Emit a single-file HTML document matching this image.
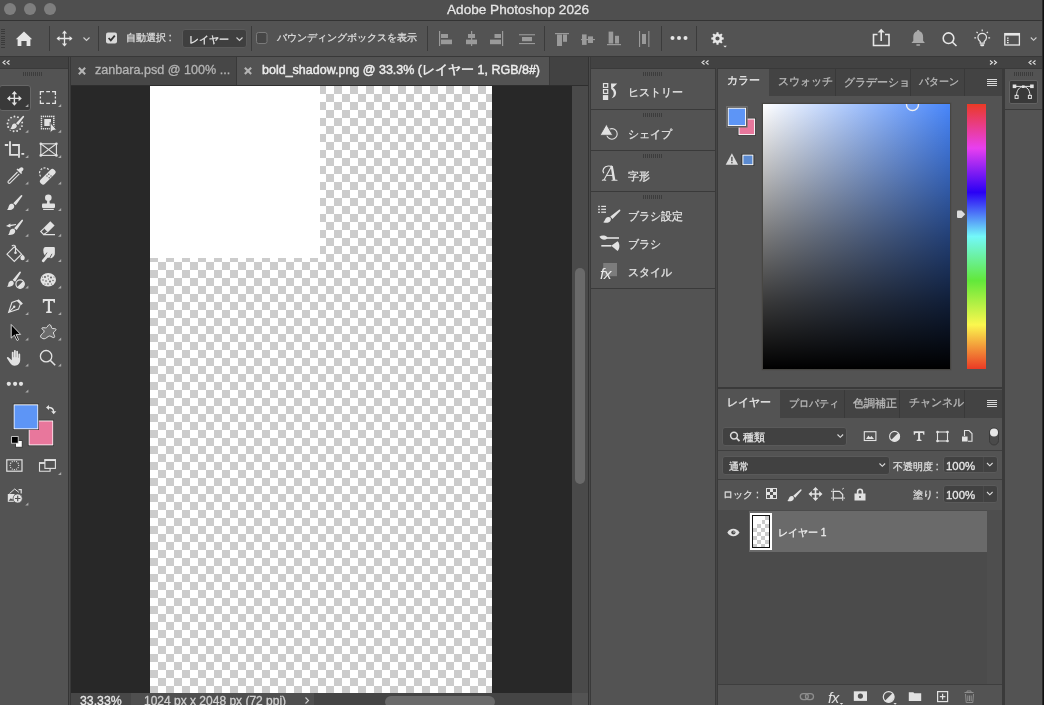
<!DOCTYPE html>
<html><head><meta charset="utf-8">
<style>
*{box-sizing:border-box;margin:0;padding:0}
html,body{width:1044px;height:705px;overflow:hidden;background:#535353;font-family:"Liberation Sans",sans-serif;color:#e0e0e0}
.a{position:absolute}
svg{position:absolute;overflow:visible}
.t{position:absolute;white-space:nowrap;line-height:1;will-change:transform;-webkit-text-stroke-width:0.3px}
</style></head><body>
<!-- title bar -->
<div class="a" style="left:0;top:0;width:1044px;height:20px;background:#4f4f4f"></div>
<div class="a" style="left:0;top:20px;width:1044px;height:1px;background:#333"></div>
<div class="a" style="left:4px;top:3px;width:12px;height:12px;border-radius:50%;background:#7e7e7e"></div>
<div class="a" style="left:24px;top:3px;width:12px;height:12px;border-radius:50%;background:#7e7e7e"></div>
<div class="a" style="left:44px;top:3px;width:12px;height:12px;border-radius:50%;background:#7e7e7e"></div>
<div class="t" style="left:447px;top:3px;font-size:13.6px;color:#e6e6e6">Adobe Photoshop 2026</div>

<!-- options bar -->
<div class="a" style="left:0;top:21px;width:1044px;height:35px;background:#535353"></div>
<div class="a" style="left:0;top:56px;width:1044px;height:1px;background:#383838"></div>


<!-- options bar content -->
<div class="a" style="left:1px;top:29px;width:4px;height:19px;background:repeating-linear-gradient(#3a3a3a 0 1px,transparent 1px 2.2px)"></div>
<svg style="left:0;top:0" width="1044" height="57">
 <g fill="#e6e6e6">
  <path d="M24 31.5 L32.2 39.2 L30.4 39.2 L30.4 46 L26.6 46 L26.6 41 L21.4 41 L21.4 46 L17.6 46 L17.6 39.2 L15.8 39.2 Z"/>
 </g>
 <rect x="49" y="26" width="1" height="25" fill="#3b3b3b"/>
 <g stroke="#e6e6e6" stroke-width="1.3" fill="none"><path d="M64.5 31.5 V45.5 M57.5 38.5 H71.5"/></g>
 <g fill="#e6e6e6"><path d="M64.5 30.5 l-2.6 3 h5.2z M64.5 46.5 l-2.6 -3 h5.2z M56.5 38.5 l3 -2.6 v5.2z M72.5 38.5 l-3 -2.6 v5.2z"/></g>
 <path d="M83.5 37.5 l3 3 l3 -3" stroke="#d0d0d0" stroke-width="1.1" fill="none"/>
 <rect x="98" y="26" width="1" height="25" fill="#3b3b3b"/>
 <rect x="106" y="32.5" width="11" height="11" rx="2" fill="#d9d9d9"/>
 <path d="M108.6 38 l2.2 2.3 l4 -4.6" stroke="#333" stroke-width="1.8" fill="none"/>
 <rect x="182.5" y="29.5" width="64" height="18" rx="2.5" fill="#3f3f3f" stroke="#5a5a5a"/>
 <path d="M236.5 37.5 l3 3 l3 -3" stroke="#d0d0d0" stroke-width="1.1" fill="none"/>
 <rect x="251" y="26" width="1" height="25" fill="#3b3b3b"/>
 <rect x="256.5" y="32.5" width="10.5" height="11" rx="2" fill="#464646" stroke="#7a7a7a"/>
 <rect x="427" y="26" width="1" height="25" fill="#3b3b3b"/>
 <g fill="#9a9a9a">
  <rect x="439" y="31" width="1.2" height="15"/><rect x="441" y="34" width="7" height="4"/><rect x="441" y="39.6" width="11" height="4.6"/>
  <rect x="471" y="31" width="1.2" height="15"/><rect x="468" y="34" width="7" height="4"/><rect x="466" y="39.6" width="11" height="4.6"/>
  <rect x="502" y="31" width="1.2" height="15"/><rect x="494.5" y="34" width="6.5" height="4"/><rect x="490" y="39.6" width="11" height="4.6"/>
  <rect x="519" y="34.2" width="16" height="1.1"/><rect x="522" y="37" width="10" height="4.2"/><rect x="519" y="43" width="16" height="1.1"/>
  <rect x="555" y="33" width="14" height="1.2"/><rect x="557" y="34.5" width="5" height="11.5"/><rect x="563" y="34.5" width="4" height="7.3"/>
  <rect x="581" y="39" width="14" height="1.1"/><rect x="582" y="34.4" width="4.6" height="10.5"/><rect x="588" y="36.4" width="5" height="6.6"/>
  <rect x="607" y="44" width="14" height="1.2"/><rect x="608.6" y="31.6" width="4.6" height="11.9"/><rect x="615" y="35.8" width="4" height="7.7"/>
  <rect x="639" y="31" width="1.1" height="16"/><rect x="648.3" y="31" width="1.1" height="16"/><rect x="642" y="34" width="4" height="10"/>
 </g>
 <rect x="544" y="26" width="1" height="25" fill="#3b3b3b"/>
 <rect x="661" y="26" width="1" height="25" fill="#3b3b3b"/>
 <g fill="#e6e6e6"><circle cx="672.5" cy="38" r="2"/><circle cx="679" cy="38" r="2"/><circle cx="685.5" cy="38" r="2"/></g>
 <rect x="696" y="26" width="1" height="25" fill="#3b3b3b"/>
</svg>
<div class="t" style="left:126.2px;top:33.4px;font-size:10.3px;color:#dcdcdc">自動選択 :</div>
<div class="t" style="left:189px;top:35px;font-size:10.3px;color:#e6e6e6">レイヤー</div>
<div class="t" style="left:276.6px;top:33.4px;font-size:10.2px;color:#dcdcdc">バウンディングボックスを表示</div>


<svg style="left:0;top:0" width="1044" height="57">
 <!-- gear -->
 <g transform="translate(717.5 38.5)" fill="#e6e6e6">
  <path fill-rule="evenodd" d="M6.22 -0.99 L6.22 0.99 L4.55 1.17 L4.05 2.39 L5.10 3.70 L3.70 5.10 L2.39 4.05 L1.17 4.55 L0.99 6.22 L-0.99 6.22 L-1.17 4.55 L-2.39 4.05 L-3.70 5.10 L-5.10 3.70 L-4.05 2.39 L-4.55 1.17 L-6.22 0.99 L-6.22 -0.99 L-4.55 -1.17 L-4.05 -2.39 L-5.10 -3.70 L-3.70 -5.10 L-2.39 -4.05 L-1.17 -4.55 L-0.99 -6.22 L0.99 -6.22 L1.17 -4.55 L2.39 -4.05 L3.70 -5.10 L5.10 -3.70 L4.05 -2.39 L4.55 -1.17Z M2.1 0 A2.1 2.1 0 1 0 -2.1 0 A2.1 2.1 0 1 0 2.1 0Z"/>
 </g>
 <path d="M723.3 45.8 h3.6 l-1.8 1.8z" fill="#e6e6e6"/>
 <!-- share -->
 <g stroke="#e6e6e6" stroke-width="1.6" fill="none">
  <path d="M877.5 34.5 h-4 v11 h15.5 v-11 h-4"/>
  <path d="M881.2 41 V30.5"/>
 </g>
 <path d="M881.2 28.8 l-3.6 3.8 h7.2z" fill="#e6e6e6"/>
 <!-- bell -->
 <g fill="#a9a9a9">
  <path d="M918.2 30 c-0.9 0 -1.3 0.6 -1.3 1.3 c-2.7 0.8 -3.6 3 -3.6 5.6 v3.8 l-1.8 2.3 h13.4 l-1.8 -2.3 v-3.8 c0 -2.6 -0.9 -4.8 -3.6 -5.6 c0 -0.7 -0.4 -1.3 -1.3 -1.3z"/>
  <rect x="916.2" y="44.2" width="4" height="1.6" rx="0.8"/>
 </g>
 <!-- search -->
 <g stroke="#e6e6e6" stroke-width="1.6" fill="none">
  <circle cx="948.5" cy="38.2" r="5.3"/>
  <path d="M952.3 42 l4.2 4"/>
 </g>
 <!-- bulb -->
 <g stroke="#e6e6e6" stroke-width="1.2" fill="none">
  <path d="M980.2 43.2 v-1.8 c-1.3 -0.9 -2.3 -2.2 -2.3 -3.8 c0 -2.5 2 -4.3 4.3 -4.3 c2.3 0 4.3 1.8 4.3 4.3 c0 1.6 -1 2.9 -2.3 3.8 v1.8 z"/>
  <path d="M982.2 29.5 v1.8 M976.5 31.8 l1.2 1.2 M987.9 31.8 l-1.2 1.2 M974.3 37.8 h1.8 M990.1 37.8 h-1.8"/>
 </g>
 <path d="M980.2 44.2 h4 v0.8 c0 0.7 -0.7 1.3 -2 1.3 c-1.3 0 -2 -0.6 -2 -1.3z" fill="#e6e6e6"/>
 <!-- workspace -->
 <rect x="1004.8" y="33.6" width="14.6" height="11.4" fill="none" stroke="#e6e6e6" stroke-width="1.3"/>
 <rect x="1004.8" y="33.6" width="14.6" height="2" fill="#e6e6e6"/>
 <g fill="#e6e6e6"><rect x="1007" y="37.5" width="1.6" height="1.3"/><rect x="1007" y="39.8" width="1.6" height="1.3"/><rect x="1007" y="42" width="1.6" height="1.3"/></g>
 <path d="M1030.8 37.5 l2.8 2.8 l2.8 -2.8" stroke="#d0d0d0" stroke-width="1.1" fill="none"/>
</svg>

<!-- left toolbar -->
<div class="a" style="left:0;top:57px;width:68px;height:11px;background:#424242"></div>
<div class="a" style="left:0;top:68px;width:68px;height:1px;background:#3a3a3a"></div>
<div class="a" style="left:0;top:69px;width:68px;height:636px;background:#535353"></div>
<div class="a" style="left:68px;top:57px;width:1px;height:648px;background:#353535"></div>
<div class="a" style="left:69px;top:57px;width:1px;height:648px;background:#484848"></div>
<div class="a" style="left:70px;top:57px;width:1px;height:648px;background:#383838"></div>


<!-- toolbar icons -->
<div class="a" style="left:23px;top:72px;width:20px;height:4px;background:repeating-linear-gradient(90deg,#3c3c3c 0 1px,transparent 1px 2px)"></div>
<div class="a" style="left:-1px;top:85px;width:32px;height:26px;background:#393939;border:1px solid #666;border-radius:3px"></div>
<svg style="left:0;top:0" width="70" height="520">
 <defs><g id="brush"><path d="M0 0 C2.2 0.4 5.2 0.2 6.6 -1.6 C7.6 -2.9 7.4 -4.8 6.2 -5.6 C5 -6.4 3.2 -6 2.2 -4.6 C1.4 -3.4 1.6 -1.4 0 0Z"/><path d="M8.73 -4.48 L15.25 -13.46 A0.85 0.85 0 0 0 13.95 -14.54 L6.27 -6.52Z"/></g></defs>
 <g fill="#a9a9a9"><path d="M28.4 103.9 V106.9 H25.2Z"/><path d="M61.2 103.9 V106.9 H58Z"/><path d="M28.4 129.7 V132.7 H25.2Z"/><path d="M61.2 129.7 V132.7 H58Z"/><path d="M28.4 155.0 V158.0 H25.2Z"/><path d="M61.2 155.0 V158.0 H58Z"/><path d="M28.4 181.5 V184.5 H25.2Z"/><path d="M61.2 181.5 V184.5 H58Z"/><path d="M28.4 208.0 V211.0 H25.2Z"/><path d="M61.2 208.0 V211.0 H58Z"/><path d="M28.4 233.8 V236.8 H25.2Z"/><path d="M61.2 233.8 V236.8 H58Z"/><path d="M28.4 259.0 V262.0 H25.2Z"/><path d="M61.2 259.0 V262.0 H58Z"/><path d="M28.4 285.5 V288.5 H25.2Z"/><path d="M61.2 285.5 V288.5 H58Z"/><path d="M28.4 312.0 V315.0 H25.2Z"/><path d="M61.2 312.0 V315.0 H58Z"/><path d="M28.4 337.5 V340.5 H25.2Z"/><path d="M61.2 337.5 V340.5 H58Z"/><path d="M28.4 363.5 V366.5 H25.2Z"/><path d="M61.2 363.5 V366.5 H58Z"/><path d="M28.4 389.5 V392.5 H25.2Z"/></g>
 <g fill="#e2e2e2" stroke="none">
  <!-- move -->
  <path d="M14.4 91 l-2.8 3.2 h2.1 v3.5 h-3.5 v-2.1 l-3.2 2.8 l3.2 2.8 v-2.1 h3.5 v3.5 h-2.1 l2.8 3.2 l2.8 -3.2 h-2.1 v-3.5 h3.5 v2.1 l3.2 -2.8 l-3.2 -2.8 v2.1 h-3.5 v-3.5 h2.1z"/>
  <rect x="41" y="116" width="1.2" height="1.2"/><rect x="41" y="128" width="1.2" height="1.2"/><rect x="43" y="116" width="1.2" height="1.2"/><rect x="43" y="128" width="1.2" height="1.2"/><rect x="45" y="116" width="1.2" height="1.2"/><rect x="45" y="128" width="1.2" height="1.2"/><rect x="47" y="116" width="1.2" height="1.2"/><rect x="47" y="128" width="1.2" height="1.2"/><rect x="49" y="116" width="1.2" height="1.2"/><rect x="49" y="128" width="1.2" height="1.2"/><rect x="51" y="116" width="1.2" height="1.2"/><rect x="51" y="128" width="1.2" height="1.2"/><rect x="53" y="116" width="1.2" height="1.2"/><rect x="53" y="128" width="1.2" height="1.2"/><rect x="41" y="118" width="1.2" height="1.2"/><rect x="53" y="118" width="1.2" height="1.2"/><rect x="41" y="120" width="1.2" height="1.2"/><rect x="53" y="120" width="1.2" height="1.2"/><rect x="41" y="122" width="1.2" height="1.2"/><rect x="53" y="122" width="1.2" height="1.2"/><rect x="41" y="124" width="1.2" height="1.2"/><rect x="53" y="124" width="1.2" height="1.2"/><rect x="41" y="126" width="1.2" height="1.2"/><rect x="53" y="126" width="1.2" height="1.2"/>
  <rect x="40.70" y="115.60" width="1.2" height="1.2"/><rect x="40.70" y="128.20" width="1.2" height="1.2"/><rect x="42.80" y="115.60" width="1.2" height="1.2"/><rect x="42.80" y="128.20" width="1.2" height="1.2"/><rect x="44.90" y="115.60" width="1.2" height="1.2"/><rect x="44.90" y="128.20" width="1.2" height="1.2"/><rect x="47.00" y="115.60" width="1.2" height="1.2"/><rect x="47.00" y="128.20" width="1.2" height="1.2"/><rect x="49.10" y="115.60" width="1.2" height="1.2"/><rect x="49.10" y="128.20" width="1.2" height="1.2"/><rect x="51.20" y="115.60" width="1.2" height="1.2"/><rect x="51.20" y="128.20" width="1.2" height="1.2"/><rect x="53.30" y="115.60" width="1.2" height="1.2"/><rect x="53.30" y="128.20" width="1.2" height="1.2"/><rect x="40.70" y="117.70" width="1.2" height="1.2"/><rect x="53.30" y="117.70" width="1.2" height="1.2"/><rect x="40.70" y="119.80" width="1.2" height="1.2"/><rect x="53.30" y="119.80" width="1.2" height="1.2"/><rect x="40.70" y="121.90" width="1.2" height="1.2"/><rect x="53.30" y="121.90" width="1.2" height="1.2"/><rect x="40.70" y="124.00" width="1.2" height="1.2"/><rect x="53.30" y="124.00" width="1.2" height="1.2"/><rect x="40.70" y="126.10" width="1.2" height="1.2"/><rect x="53.30" y="126.10" width="1.2" height="1.2"/>
  <path d="M44.3 119 H51 V126 H44.3Z"/>
  <path d="M50.2 122.4 V133 L52.6 130.6 L56.6 129.8Z" stroke="#535353" stroke-width="0.9" stroke-linejoin="round"/>
  <!-- eyedropper head -->
  <path d="M20.2 167.8 a1.9 1.9 0 0 1 2.7 2.7 l-1.6 1.6 l0.9 0.9 l-1.1 1.1 l-4.6 -4.6 l1.1 -1.1 l0.9 0.9z"/>
  <!-- healing -->
  <path d="M54.8 170.3 a2.6 2.6 0 0 1 0 3.7 l-9.8 9.8 a2.6 2.6 0 0 1 -3.7 0 l-0.6 -0.6 a2.6 2.6 0 0 1 0 -3.7 l9.8 -9.8 a2.6 2.6 0 0 1 3.7 0z"/>
  <!-- brush -->
  <use href="#brush" transform="translate(7 209.8)"/>
  <!-- stamp -->
  <circle cx="48.3" cy="197.8" r="3.3"/>
  <path d="M47.2 200 h2.2 l0.4 3.9 h-2.9z"/>
  <rect x="42" y="203.6" width="13" height="4.3" rx="1"/>
  <rect x="43.1" y="208.8" width="10.7" height="1.2"/>
  <!-- history brush -->
  <use href="#brush" transform="translate(8.1 234.9) rotate(-2)"/>
  <path d="M6 226 l4.4 -2.6 v1.3 l5.6 -0.6 v0.9 l-5.6 1.3 v1.3z"/>
  <!-- eraser -->
  <path d="M50.3 221.3 L54.6 225.6 L47.9 232.3 L43.6 228Z"/>
  <!-- bucket drop -->
  <path d="M22.6 254.5 c1.3 1.2 2.2 2.4 2.2 3.6 a2.2 2.2 0 0 1 -4.4 0 c0 -1.2 0.9 -2.4 2.2 -3.6z"/>
  <circle cx="15.5" cy="252.7" r="1.3"/>
  <!-- smudge -->
  <path d="M45.6 247 H53.8 Q54.9 247 54.9 248.3 V253 Q54.9 256.5 51.2 258.2 L47.5 257.5 Q43.3 255.5 43.3 250.5 Q43.3 247 45.6 247Z"/>
  <!-- brush + circle -->
  <use href="#brush" transform="translate(7 286.8) rotate(-4) scale(0.97)"/>
  <!-- pen nib top -->
  <path d="M18.6 299.2 l4.3 4.3 l-1.6 1.6 l-4.3 -4.3z"/>
  <!-- T -->
  <path d="M42.8 299 h12.2 v3.8 h-1.2 l-0.7 -1.9 h-3.1 v10.3 l1.7 0.6 v1.2 h-5.6 v-1.2 l1.7 -0.6 v-10.3 h-3.1 l-0.7 1.9 h-1.2z"/>
  <!-- hand -->
  <path d="M11.8 352.6 a0.9 0.9 0 0 1 1.8 0 v4.6 h0.4 v-6.4 a0.9 0.9 0 0 1 1.8 0 v6.4 h0.4 v-5.6 a0.9 0.9 0 0 1 1.8 0 v6.2 h0.4 v-3.4 a0.9 0.9 0 0 1 1.8 0 v5.6 c0 3 -2.2 5.7 -5.4 5.7 c-2.3 0 -3.6 -1.2 -4.7 -2.8 l-3.1 -4.6 a0.9 0.9 0 0 1 1.4 -1.1 l3.4 3.1z"/>
  <!-- dots -->
  <circle cx="8.8" cy="383.8" r="2.1"/><circle cx="15.1" cy="383.8" r="2.1"/><circle cx="21" cy="383.8" r="2.1"/>
 </g>
 <g fill="none" stroke="#e2e2e2" stroke-width="1.3">
  <!-- marquee -->
  <path d="M40.4 95 V91.6 H44 M46.2 91.6 H50 M52 91.6 H55.4 V95 M55.4 96.6 V98.4 M55.4 100.2 V103.3 H52 M50 103.3 H46.2 M44 103.3 H40.4 V100.2 M40.4 98.4 V96.6"/>
  <!-- quick selection circle -->
  <circle cx="14.9" cy="123.9" r="7.3" fill="#626262" stroke="none"/>
  <!-- object selection dotted -->
  
  <!-- crop -->
  <path d="M4.8 145 h3.4 M10 141.2 v13.6 h8 M12.2 145 h6.8 v12.8 M21.4 153.8 h2.8" stroke-width="1.8"/>
  <!-- frame -->
  <rect x="40.8" y="143.8" width="15.6" height="11.6" stroke-width="1.1"/>
  <path d="M40.8 143.8 L56.4 155.4 M56.4 143.8 L40.8 155.4" stroke-width="1.1"/>
  <!-- eyedropper tube -->
  <path d="M17.5 172 l-9.3 9.3 a1.3 1.3 0 0 0 1.8 1.8 l9.3 -9.3" stroke-width="1.1"/>
  <!-- healing dashed arc -->
  <path d="M40.6 176.4 a5 5 0 0 1 8.4 -6.4" stroke-dasharray="2 1.4" stroke-width="1.2"/>
  <!-- eraser outline -->
  <path d="M44 228.4 L40.7 231.5 L43.6 234.5 L47.5 231.9 M43.2 234.6 H55" stroke-width="1.1"/>
  <!-- bucket -->
  <path d="M7 254.2 l7.3 -7.3 l7.3 7.3 l-7.3 7.3z" stroke-width="1.1"/>
  <path d="M15.5 252.6 v-6 c0 -1.5 -2.6 -2 -3.6 -0.5" stroke-width="1.1"/>
  <!-- brush circle -->
  <circle cx="20.1" cy="284.1" r="4.2" stroke-width="1.2"/>
  <!-- pen body -->
  <path d="M17.3 300.5 l-5.4 2 l-3.3 9.9 l9.9 -3.3 l2 -5.4z M8.6 312.4 l5.6 -5.6" stroke-width="1.1"/>
  <!-- zoom -->
  <circle cx="46.1" cy="356.2" r="5.7" stroke-width="1.3"/>
  <path d="M50.2 360.3 l5 5" stroke-width="1.6"/>
 </g>
 <g fill="#e2e2e2">
  <path d="M23 281.2 A4.1 4.1 0 0 1 17.2 287 Z"/>
  <circle cx="14.2" cy="306.8" r="1.2"/>
 </g>
 <g fill="#e2e2e2"><circle cx="40.8" cy="143.8" r="1.3"/><circle cx="56.4" cy="143.8" r="1.3"/><circle cx="40.8" cy="155.4" r="1.3"/><circle cx="56.4" cy="155.4" r="1.3"/></g>
 <!-- arrow -->
 <path d="M11.2 324.5 v13.6 l3.2 -3 l2.6 5.4 l1.6 -0.8 l-2.5 -5.3 h4.5z" fill="#000" stroke="#e2e2e2" stroke-width="0.9" stroke-linejoin="round"/>
 <!-- custom shape -->
 <path d="M49.6 324.6 c1.4 0 1.6 2.5 2.2 3.6 c1 1 4.2 -0.4 4.2 1.4 c0 1.5 -2.8 1.9 -2.6 3.4 c0.3 1.6 2 3.4 0.9 4.4 c-1.1 1 -3.2 -1.5 -4.8 -1.4 c-1.8 0.2 -3.3 2.8 -5.4 2.8 c-1.8 0 -3.6 -1.2 -3.6 -2.6 c0 -1.8 4.3 -3.4 3.7 -5.3 c-0.4 -1.2 -2.9 -1.6 -2.3 -2.8 c0.6 -1.1 3.3 0.3 4.5 -0.4 c1.3 -0.8 1.8 -3.1 3.2 -3.1z" fill="#6b6b6b" stroke="#e2e2e2" stroke-width="1"/>
 <path d="M48.8 254.2 L43.2 260.8" stroke="#e2e2e2" stroke-width="2.8" stroke-linecap="round"/>
 <g fill="none" stroke="#535353" stroke-width="0.9"><path d="M47 252.6 L44.3 256.6 M52 253.8 L49.4 258.6"/></g>
 <!-- sponge -->
 <ellipse cx="48.2" cy="279.8" rx="7.8" ry="6.8" fill="#e2e2e2"/>
 <g fill="#535353"><circle cx="45" cy="277" r="0.9"/><circle cx="48" cy="276" r="0.8"/><circle cx="51" cy="277.5" r="0.9"/><circle cx="46" cy="281" r="0.8"/><circle cx="50" cy="281.5" r="0.9"/><circle cx="43" cy="280" r="0.7"/><circle cx="53" cy="280.5" r="0.7"/><circle cx="48" cy="284" r="0.8"/><circle cx="45" cy="284" r="0.6"/><circle cx="51.5" cy="284" r="0.6"/><circle cx="48.5" cy="279" r="0.6"/><circle cx="54" cy="277" r="0.5"/><circle cx="42.5" cy="277" r="0.5"/></g>
 <!-- quick selection brush -->
 <g fill="#e2e2e2"><circle cx="21.97" cy="126.09" r="0.95"/><circle cx="20.14" cy="129.12" r="0.95"/><circle cx="17.12" cy="130.96" r="0.95"/><circle cx="13.58" cy="131.18" r="0.95"/><circle cx="10.35" cy="129.73" r="0.95"/><circle cx="8.16" cy="126.95" r="0.95"/><circle cx="7.51" cy="123.47" r="0.95"/><circle cx="8.56" cy="120.08" r="0.95"/><circle cx="11.06" cy="117.58" r="0.95"/><circle cx="14.44" cy="116.51" r="0.95"/><circle cx="17.92" cy="117.15" r="0.95"/><circle cx="20.72" cy="119.32" r="0.95"/><circle cx="22.18" cy="122.55" r="0.95"/></g>
 <use href="#brush" fill="#535353" stroke="#535353" stroke-width="1.6" transform="translate(10.3 129) scale(0.9)"/>
 <use href="#brush" fill="#e2e2e2" transform="translate(10.3 129) scale(0.9)"/>
 <!-- healing dots -->
 <g fill="#535353"><circle cx="47" cy="176" r="0.7"/><circle cx="48.8" cy="174.2" r="0.7"/><circle cx="49.2" cy="177.8" r="0.7"/><circle cx="51" cy="176" r="0.7"/></g>
</svg>


<!-- colors & bottom tools -->
<svg style="left:0;top:0" width="70" height="520">
 <rect x="28.9" y="420.8" width="24.1" height="24.3" fill="#e8779c" stroke="#fff" stroke-width="1.2"/>
 <rect x="28.2" y="420.1" width="25.5" height="25.7" fill="none" stroke="#2a2a2a" stroke-width="0.6"/>
 <rect x="13.9" y="404.7" width="24.1" height="24.3" fill="#5d95f6" stroke="#fff" stroke-width="1.2"/>
 <rect x="13.2" y="404" width="25.5" height="25.7" fill="none" stroke="#2a2a2a" stroke-width="0.6"/>
 <!-- swap -->
 <g fill="none" stroke="#e2e2e2" stroke-width="1.3"><path d="M48.5 407.5 c3.6 0 5.2 1.6 5.2 4.6"/></g>
 <g fill="#e2e2e2"><path d="M46 407.5 l3 -2.6 v5.2z M53.7 414.3 l-2.6 -3 h5.2z"/></g>
 <!-- default colors -->
 <rect x="15.6" y="440.6" width="6.6" height="6.6" fill="#fff" stroke="#2a2a2a" stroke-width="0.8"/>
 <rect x="11.6" y="436.6" width="6.6" height="6.6" fill="#000" stroke="#e2e2e2" stroke-width="0.8"/>
 <!-- quick mask -->
 <rect x="6.8" y="459.8" width="15.2" height="11.4" fill="none" stroke="#e2e2e2" stroke-width="1.2"/>
 <g fill="#e2e2e2"><circle cx="18.70" cy="465.40" r="0.65"/><circle cx="18.12" cy="467.55" r="0.65"/><circle cx="16.55" cy="469.12" r="0.65"/><circle cx="14.40" cy="469.70" r="0.65"/><circle cx="12.25" cy="469.12" r="0.65"/><circle cx="10.68" cy="467.55" r="0.65"/><circle cx="10.10" cy="465.40" r="0.65"/><circle cx="10.68" cy="463.25" r="0.65"/><circle cx="12.25" cy="461.68" r="0.65"/><circle cx="14.40" cy="461.10" r="0.65"/><circle cx="16.55" cy="461.68" r="0.65"/><circle cx="18.12" cy="463.25" r="0.65"/></g>
 <!-- screen mode -->
 <rect x="44.9" y="459.8" width="10.5" height="8.6" fill="none" stroke="#e2e2e2" stroke-width="1.1"/>
 <rect x="44.4" y="459.2" width="11.5" height="1.8" fill="#e2e2e2"/>
 <path d="M44.9 462.8 h-5.4 v8.4 h10.6 v-2.8" fill="none" stroke="#e2e2e2" stroke-width="1.1"/>
 <rect x="39" y="462.3" width="5.9" height="1.6" fill="#e2e2e2"/>
 <path d="M61.2 472 V475 H58Z" fill="#a9a9a9"/>
 <!-- artboard/new -->
 <path d="M9.5 493.6 l5.2 -4.6 l4.2 3.4" fill="none" stroke="#e2e2e2" stroke-width="1"/>
 <path d="M18.6 489.6 h2.6 v4" fill="none" stroke="#e2e2e2" stroke-width="1.2"/>
 <rect x="7.8" y="494" width="6.8" height="7.8" fill="#e2e2e2"/>
 <path d="M8.6 500.8 l2.2 -2.6 l1.5 1.4 l1.3 -1.2 v2.4z" fill="#535353"/>
 <circle cx="17.7" cy="498.5" r="4.6" fill="#e2e2e2" stroke="#535353" stroke-width="0.8"/>
 <path d="M17.7 495.8 v5.4 M15 498.5 h5.4" stroke="#535353" stroke-width="1.2"/>
 <path d="M28.4 502.5 V505.5 H25.2Z" fill="#a9a9a9"/>
</svg>

<!-- document tabs -->
<div class="a" style="left:71px;top:57px;width:517px;height:28px;background:#424242"></div>
<div class="a" style="left:71px;top:57px;width:165px;height:28px;background:#474747"></div>
<div class="a" style="left:236px;top:57px;width:1px;height:28px;background:#393939"></div>
<div class="a" style="left:237px;top:57px;width:312px;height:28px;background:#535353"></div>
<div class="a" style="left:549px;top:57px;width:1px;height:28px;background:#393939"></div>
<div class="a" style="left:71px;top:85px;width:517px;height:1px;background:#2e2e2e"></div>


<svg style="left:0;top:0" width="1044" height="90">
 <g stroke="#b4b4b4" stroke-width="2.1" stroke-linecap="square"><path d="M79.6 68.6 l4.8 4.8 M84.4 68.6 l-4.8 4.8"/></g>
 <g stroke="#b4b4b4" stroke-width="2.1" stroke-linecap="square"><path d="M245.6 68.5 l4.8 4.8 M250.4 68.5 l-4.8 4.8"/></g>
</svg>
<div class="t" style="left:95px;top:63.6px;font-size:12.6px;color:#b4b4b4">zanbara.psd @ 100% ...</div>
<div class="t" style="left:262px;top:64px;font-size:12.5px;color:#ececec;-webkit-text-stroke-width:0.45px">bold_shadow.png @ 33.3% (レイヤー 1, RGB/8#)</div>

<!-- canvas pasteboard -->
<div class="a" style="left:71px;top:86px;width:501px;height:607px;background:#282828"></div>
<div class="a" id="canvas" style="left:150px;top:86px;width:342px;height:607px;background:conic-gradient(#cccccc 25%,#fff 0 50%,#cccccc 0 75%,#fff 0);background-size:16px 16px"></div>
<div class="a" style="left:150px;top:86px;width:170px;height:172px;background:#fff"></div>
<!-- v scrollbar -->
<div class="a" style="left:572px;top:86px;width:16px;height:619px;background:#4a4a4a"></div>
<div class="a" style="left:575px;top:268px;width:10px;height:216px;border-radius:5px;background:#6a6a6a"></div>
<!-- status bar -->
<div class="a" style="left:71px;top:693px;width:501px;height:12px;background:#454545"></div>
<div class="a" style="left:572px;top:693px;width:16px;height:12px;background:#535353"></div>
<div class="a" style="left:71px;top:693px;width:60px;height:12px;background:#474747"></div>
<div class="a" style="left:131px;top:693px;width:183px;height:12px;background:#4f4f4f"></div>
<div class="a" style="left:385px;top:696px;width:110px;height:12px;border-radius:6px;background:#6a6a6a"></div>
<div class="a" style="left:588px;top:57px;width:2px;height:648px;background:#333"></div>

<!-- dock 1 -->
<div class="a" style="left:588px;top:57px;width:1px;height:648px;background:#333"></div>
<div class="a" style="left:589px;top:57px;width:1px;height:648px;background:#4a4a4a"></div>
<div class="a" style="left:590px;top:57px;width:1px;height:648px;background:#3a3a3a"></div>
<div class="a" style="left:591px;top:57px;width:124px;height:11px;background:#424242"></div>
<div class="a" style="left:591px;top:68px;width:124px;height:637px;background:#535353"></div>
<div class="a" style="left:591px;top:68px;width:124px;height:1px;background:#3a3a3a"></div>
<div class="a" style="left:591px;top:109px;width:124px;height:1px;background:#3a3a3a"></div>
<div class="a" style="left:591px;top:150px;width:124px;height:1px;background:#3a3a3a"></div>
<div class="a" style="left:591px;top:191px;width:124px;height:1px;background:#3a3a3a"></div>
<div class="a" style="left:591px;top:288px;width:124px;height:1px;background:#3a3a3a"></div>
<div class="a" style="left:715px;top:57px;width:3px;height:11px;background:#424242"></div>
<div class="a" style="left:715px;top:68px;width:1px;height:637px;background:#3a3a3a"></div>
<div class="a" style="left:716px;top:68px;width:1px;height:637px;background:#454545"></div>
<div class="a" style="left:717px;top:68px;width:1px;height:637px;background:#3a3a3a"></div>

<!-- dock 2 -->
<div class="a" style="left:718px;top:57px;width:285px;height:11px;background:#424242"></div>
<div class="a" style="left:718px;top:68px;width:284px;height:319px;background:#535353"></div>
<div class="a" style="left:718px;top:68px;width:284px;height:28px;background:#434343"></div>
<div class="a" style="left:718px;top:68px;width:51px;height:28px;background:#535353"></div>
<div class="a" style="left:835px;top:68px;width:1px;height:28px;background:#393939"></div>
<div class="a" style="left:910px;top:68px;width:1px;height:28px;background:#393939"></div>
<div class="a" style="left:964px;top:68px;width:1px;height:28px;background:#393939"></div>
<div class="a" style="left:718px;top:387px;width:284px;height:2px;background:#3a3a3a"></div>
<div class="a" style="left:718px;top:389px;width:284px;height:316px;background:#535353"></div>
<div class="a" style="left:718px;top:390px;width:284px;height:28px;background:#434343"></div>
<div class="a" style="left:718px;top:390px;width:62px;height:28px;background:#535353"></div>
<div class="a" style="left:844px;top:390px;width:1px;height:28px;background:#393939"></div>
<div class="a" style="left:899px;top:390px;width:1px;height:28px;background:#393939"></div>
<div class="a" style="left:964px;top:390px;width:1px;height:28px;background:#393939"></div>
<div class="a" style="left:718px;top:450px;width:284px;height:1px;background:#3e3e3e"></div>
<div class="a" style="left:718px;top:479px;width:284px;height:1px;background:#3e3e3e"></div>
<div class="a" style="left:718px;top:510px;width:284px;height:174px;background:#4b4b4b"></div>
<div class="a" style="left:987px;top:510px;width:15px;height:174px;background:#4e4e4e"></div>
<div class="a" style="left:749px;top:511px;width:238px;height:41px;background:#6a6a6a"></div>
<div class="a" style="left:718px;top:684px;width:284px;height:1px;background:#3e3e3e"></div>
<div class="a" style="left:1002px;top:57px;width:3px;height:11px;background:#424242"></div>
<div class="a" style="left:1002px;top:68px;width:3px;height:637px;background:#3a3a3a"></div>
<div class="a" style="left:718px;top:68px;width:284px;height:1px;background:#393939"></div>

<!-- right strip -->
<div class="a" style="left:1005px;top:57px;width:39px;height:11px;background:#424242"></div>
<div class="a" style="left:1005px;top:68px;width:39px;height:637px;background:#535353"></div>
<div class="a" style="left:1005px;top:109px;width:39px;height:1px;background:#3a3a3a"></div>
<div class="a" style="left:1005px;top:68px;width:39px;height:1px;background:#3a3a3a"></div>
<div class="a" style="left:1014px;top:72px;width:20px;height:4px;background:repeating-linear-gradient(90deg,#3c3c3c 0 1px,transparent 1px 2px)"></div>
<div class="a" style="left:1009px;top:80px;width:29px;height:24px;background:#393939;border:1px solid #626262;border-radius:2px"></div>

<!-- grippers dock1 -->
<div class="a" style="left:643px;top:72px;width:20px;height:4px;background:repeating-linear-gradient(90deg,#3c3c3c 0 1px,transparent 1px 2px)"></div>
<div class="a" style="left:643px;top:113px;width:20px;height:4px;background:repeating-linear-gradient(90deg,#3c3c3c 0 1px,transparent 1px 2px)"></div>
<div class="a" style="left:643px;top:154px;width:20px;height:4px;background:repeating-linear-gradient(90deg,#3c3c3c 0 1px,transparent 1px 2px)"></div>
<div class="a" style="left:643px;top:195px;width:20px;height:4px;background:repeating-linear-gradient(90deg,#3c3c3c 0 1px,transparent 1px 2px)"></div>

<!-- dock1 labels -->
<div class="t" style="left:628px;top:87px;font-size:11.1px;color:#e2e2e2">ヒストリー</div>
<div class="t" style="left:628px;top:129px;font-size:10.8px;color:#e2e2e2">シェイプ</div>
<div class="t" style="left:628px;top:171px;font-size:10.5px;color:#e2e2e2">字形</div>
<div class="t" style="left:628px;top:211px;font-size:11.1px;color:#e2e2e2">ブラシ設定</div>
<div class="t" style="left:628px;top:239px;font-size:11.1px;color:#e2e2e2">ブラシ</div>
<div class="t" style="left:628px;top:267px;font-size:10.5px;color:#e2e2e2">スタイル</div>

<!-- dock2 labels -->
<div class="t" style="left:726.8px;top:74.8px;font-size:10.9px;color:#e8e8e8">カラー</div>
<div class="t" style="left:778px;top:76px;font-size:10.5px;color:#b8b8b8">スウォッチ</div>
<div class="t" style="left:844px;top:77px;font-size:10.7px;color:#b8b8b8">グラデーショ</div>
<div class="t" style="left:919px;top:77px;font-size:10.3px;color:#b8b8b8">パターン</div>
<div class="t" style="left:727px;top:396.6px;font-size:10.6px;color:#e8e8e8">レイヤー</div>
<div class="t" style="left:789px;top:399px;font-size:10.4px;color:#b8b8b8">プロパティ</div>
<div class="t" style="left:853px;top:398px;font-size:11.1px;color:#b8b8b8">色調補正</div>
<div class="t" style="left:909px;top:397px;font-size:10.5px;color:#b8b8b8">チャンネル</div>

<!-- color panel content -->
<div class="a" style="left:763px;top:104px;width:187px;height:265px;background:linear-gradient(to bottom,rgba(0,0,0,0) 0%,rgba(0,0,0,.26) 25%,rgba(0,0,0,.53) 50%,rgba(0,0,0,.78) 75%,#000 100%),linear-gradient(to right,#fff,rgb(72,134,250));box-shadow:0 0 1px 1px rgba(60,58,50,.5)"></div>
<div class="a" style="left:967px;top:104px;width:19px;height:265px;background:linear-gradient(to bottom,#ea3a25 0%,#e83ff0 16.67%,#2a00f5 33.33%,#73f8f9 50%,#62e83a 66.67%,#fbf74e 83.33%,#ea3a25 100%)"></div>
<svg style="left:0;top:0" width="1044" height="705">
 <clipPath id="fc"><rect x="763" y="104" width="187" height="265"/></clipPath><circle clip-path="url(#fc)" cx="912.5" cy="104.5" r="6" fill="none" stroke="#f0f0f0" stroke-width="1.4"/>
 <path d="M958 210.6 h3.6 l3.6 3.7 l-3.6 3.7 h-3.6 a1 1 0 0 1 -1 -1 v-5.4 a1 1 0 0 1 1 -1z" fill="#dcdcdc"/>
 <rect x="737.9" y="117.9" width="17.8" height="17.8" fill="#2a2a2a"/>
 <rect x="739" y="119" width="15.6" height="15.6" fill="#e8779c" stroke="#fff" stroke-width="1"/>
 <rect x="726.7" y="106.7" width="20.4" height="20.4" fill="#2a2a2a" stroke="#7a7a7a" stroke-width="1"/>
 <rect x="728.2" y="108.2" width="17.4" height="17.4" fill="#5d95f6" stroke="#fff" stroke-width="1"/>
 <path d="M731.9 153.2 l6.2 11.6 h-12.4z" fill="#dcdcdc"/>
 <rect x="731.2" y="156.8" width="1.4" height="4.4" fill="#535353"/>
 <rect x="731.2" y="162" width="1.4" height="1.4" fill="#535353"/>
 <rect x="741.5" y="153.9" width="12.8" height="12" fill="#2a2a2a"/>
 <rect x="742.9" y="155.1" width="10" height="9.6" fill="#5b8ad0" stroke="#fff" stroke-width="1"/>
 <!-- panel menu icons -->
 <g fill="#d8d8d8">
  <rect x="987" y="79" width="10" height="1"/><rect x="987" y="81" width="10" height="1"/><rect x="987" y="83" width="10" height="1"/><rect x="987" y="85" width="10" height="1"/>
  <rect x="987" y="400" width="10" height="1"/><rect x="987" y="402" width="10" height="1"/><rect x="987" y="404" width="10" height="1"/><rect x="987" y="406" width="10" height="1"/>
 </g>
 <!-- path icon right strip -->
 <g stroke="#e2e2e2" fill="none" stroke-width="1">
  <path d="M1014.5 86.4 H1031.9 M1016.6 95.4 C1016.6 90 1019.5 86.7 1023.3 86.7 C1027 86.7 1029.9 90 1029.9 95.4"/>
  <rect x="1015.1" y="95.4" width="3" height="3"/><rect x="1028.4" y="95.4" width="3" height="3"/>
 </g>
 <g fill="#e2e2e2"><rect x="1012.7" y="84.5" width="3.6" height="3.6"/><rect x="1030.1" y="84.5" width="3.6" height="3.6"/><rect x="1022" y="85.4" width="2.6" height="2.6"/></g>
</svg>


<!-- layers panel content -->
<div class="a" style="left:721.5px;top:426.5px;width:125.5px;height:19.5px;background:#414141;border:1px solid #5a5a5a;border-radius:3px"></div>
<div class="a" style="left:721.5px;top:456px;width:168px;height:19px;background:#414141;border:1px solid #5a5a5a;border-radius:3px"></div>
<div class="a" style="left:942.5px;top:456px;width:55px;height:17px;background:#414141;border:1px solid #5a5a5a;border-radius:3px"></div>
<div class="a" style="left:983px;top:457px;width:1px;height:15px;background:#4a4a4a"></div>
<div class="a" style="left:942.5px;top:484.5px;width:55px;height:18px;background:#414141;border:1px solid #5a5a5a;border-radius:3px"></div>
<div class="a" style="left:983px;top:485.5px;width:1px;height:16px;background:#4a4a4a"></div>
<div class="t" style="left:743px;top:432px;font-size:10.5px;color:#e2e2e2">種類</div>
<div class="t" style="left:729px;top:462px;font-size:10px;color:#e2e2e2">通常</div>
<div class="t" style="left:893px;top:462px;font-size:10.3px;color:#dcdcdc">不透明度 :</div>
<div class="t" style="left:946px;top:461px;font-size:11.4px;color:#e8e8e8">100%</div>
<div class="t" style="left:723px;top:490px;font-size:10.4px;color:#dcdcdc">ロック :</div>
<div class="t" style="left:913px;top:490px;font-size:10.2px;color:#dcdcdc">塗り :</div>
<div class="t" style="left:946px;top:490px;font-size:11.4px;color:#e8e8e8">100%</div>
<div class="t" style="left:778px;top:528px;font-size:10.2px;color:#ececec">レイヤー 1</div>
<div class="a" style="left:750px;top:513px;width:22px;height:37px;background:#fff"></div>
<div class="a" style="left:752px;top:515px;width:18px;height:33px;border:1.5px solid #111;background:linear-gradient(#fff,#fff) 0 0/9px 8px no-repeat,conic-gradient(#cccccc 25%,#fff 0 50%,#cccccc 0 75%,#fff 0) 0 0/8px 8px"></div>
<svg style="left:0;top:0" width="1044" height="705">
 <g stroke="#dcdcdc" stroke-width="1.3" fill="none">
  <circle cx="734" cy="435.6" r="3.4" stroke-width="1.5"/><path d="M736.5 438.2 l3 3" stroke-width="1.8"/>
  <path d="M837.5 434.5 l2.8 2.8 l2.8 -2.8" stroke-width="1.1"/>
  <path d="M879.5 463.5 l2.8 2.8 l2.8 -2.8" stroke-width="1.1"/>
  <path d="M987 463 l2.8 2.8 l2.8 -2.8" stroke-width="1.1"/>
  <path d="M987 492 l2.8 2.8 l2.8 -2.8" stroke-width="1.1"/>
 </g>
 <!-- filter icons -->
 <g stroke="#e2e2e2" fill="none" stroke-width="1.1">
  <rect x="864.3" y="431.7" width="11.6" height="8.8"/>
  <rect x="937.5" y="432" width="10" height="9"/>
  <circle cx="894.6" cy="436.4" r="5"/>
 </g>
 <g fill="#e2e2e2">
  <path d="M866 439 l2.5 -3.5 l1.5 2 l1.5 -1.5 l2.5 3z"/>
  <path d="M898.2 432.9 a5 5 0 0 1 -7.1 7.1z"/>
  <path d="M913.6 431.3 h10.8 v3.4 h-1 l-0.6 -1.7 h-2.7 v6.6 l1.4 0.5 v1 h-4.8 v-1 l1.4 -0.5 v-6.6 h-2.7 l-0.6 1.7 h-1z"/>
  <circle cx="937.5" cy="432" r="1.3"/><circle cx="947.5" cy="432" r="1.3"/><circle cx="937.5" cy="441" r="1.3"/><circle cx="947.5" cy="441" r="1.3"/>
  <rect x="962" y="436.5" width="5.6" height="5"/>
 </g>
 <path d="M964.5 436 v-5.5 h4.5 l3 3 v7.8 h-4" fill="none" stroke="#e2e2e2" stroke-width="1.1"/>
 <rect x="989.5" y="428" width="9" height="17" rx="4.5" fill="#4a4a4a" stroke="#3a3a3a" stroke-width="1"/>
 <circle cx="994" cy="432.5" r="4" fill="#e6e6e6"/>
 <!-- lock icons -->
 <g fill="#e2e2e2">
  <rect x="766" y="488" width="11" height="11"/>
 </g>
 <g fill="#535353">
  <rect x="767" y="489" width="3" height="3"/><rect x="773" y="489" width="3" height="3"/>
  <rect x="770" y="492" width="3" height="3"/>
  <rect x="767" y="495" width="3" height="3"/><rect x="773" y="495" width="3" height="3"/>
 </g>
 <g fill="#e2e2e2">
  <use href="#brush" transform="translate(787.4 500.9) rotate(5) scale(0.86)"/>
  <path d="M815.5 487 l-3 3.3 h2.2 v2.9 h-2.9 v-2.2 l-3.3 3 l3.3 3 v-2.2 h2.9 v2.9 h-2.2 l3 3.3 l3 -3.3 h-2.2 v-2.9 h2.9 v2.2 l3.3 -3 l-3.3 -3 v2.2 h-2.9 v-2.9 h2.2z"/>
  <path d="M854.5 493.5 h11 v7 h-11z M856.8 493.5 v-1.8 a3.2 3.2 0 0 1 6.4 0 v1.8 h-1.6 v-1.8 a1.6 1.6 0 0 0 -3.2 0 v1.8z"/>
 </g>
 <circle cx="860" cy="497" r="1" fill="#535353"/>
 <g stroke="#e2e2e2" fill="none" stroke-width="1.1">
  <path d="M833.3 491.3 h6.2 l3.2 3.2 v3.6 h-9.4z" stroke-width="1.2"/>
  <path d="M831 491.3 h1.6 M833.3 488.6 v1.8 M831 498.1 h1.6 M833.3 498.9 v1.8 M843.4 498.1 h1.6 M842.7 498.9 v1.8 M842.2 489.2 l1.6 -1" stroke-width="1"/>
 </g>
 <!-- eye -->
 <path d="M727.3 532.5 c1.6 -2.6 3.6 -3.8 6.1 -3.8 c2.5 0 4.5 1.2 6.1 3.8 c-1.6 2.6 -3.6 3.8 -6.1 3.8 c-2.5 0 -4.5 -1.2 -6.1 -3.8z" fill="#e2e2e2"/>
 <circle cx="733.4" cy="532.5" r="2.1" fill="#4b4b4b"/>
 <circle cx="734" cy="532" r="0.7" fill="#e2e2e2"/>
 <!-- footer icons -->
 <g stroke="#8e8e8e" fill="none" stroke-width="1.3">
  <rect x="800.3" y="693.6" width="8" height="6" rx="3"/><rect x="805.5" y="693.6" width="8" height="6" rx="3"/>
  <path d="M964.5 692.5 h9 M967 692.5 v-1.5 h4 v1.5 M965.5 694 l0.7 8.5 h6.6 l0.7 -8.5 M967.8 695.5 v5.5 M969.5 695.5 v5.5 M971.2 695.5 v5.5" stroke-width="1"/>
 </g>
 <g fill="#e2e2e2">
  <rect x="853.8" y="691.3" width="13.2" height="9.6"/>
  <path d="M908.8 692.2 h4.6 l0.8 1 h7 v7.7 h-12.4z"/>
  <path d="M892.7 693 a5.7 5.7 0 0 1 -8 8z"/>
 </g>
 <circle cx="860.4" cy="696.1" r="2.6" fill="#535353"/>
 <g stroke="#e2e2e2" fill="none" stroke-width="1.2">
  <circle cx="888.7" cy="697" r="5.4"/>
  <rect x="937.6" y="691.6" width="10" height="10"/>
  <path d="M942.6 693.8 v5.6 M939.8 696.6 h5.6"/>
 </g>
 <path d="M839.8 703 h3.4 l-1.7 1.7z M893.4 703 h3.4 l-1.7 1.7z" fill="#e2e2e2"/>
</svg>
<div class="t" style="left:827.6px;top:689.5px;font-size:15px;color:#e2e2e2;font-style:italic;letter-spacing:-0.5px;-webkit-text-stroke-width:0">fx</div>


<!-- dock1 icons -->
<svg style="left:0;top:0" width="1044" height="705">
 <g fill="none" stroke="#e2e2e2" stroke-width="1.2">
  <rect x="603.5" y="83.6" width="4.2" height="3.8"/>
  <rect x="603.5" y="89.6" width="4.2" height="3.8"/>
 </g>
 <rect x="602.9" y="95.1" width="5.3" height="4.9" fill="#e2e2e2"/>
 <path d="M611 83.6 L617.2 83.6 L611.2 89.4 Z" fill="#e2e2e2"/>
 <path d="M612.6 87.6 C615.8 89.4 616.9 92.4 615.7 95 C614.9 96.7 613.6 97.6 611.6 98.2 C613.2 96.6 614 94.6 613.7 92.7 C613.5 91.3 612.8 90.2 611.6 89.3 Z" fill="#e2e2e2"/>
 <!-- shape -->
 <circle cx="611.9" cy="133.9" r="5.3" fill="none" stroke="#e2e2e2" stroke-width="1.1"/>
 <path d="M606.4 124.2 L612.8 135.3 H600 Z" fill="#e2e2e2" stroke="#535353" stroke-width="0.9" stroke-linejoin="round"/>
 <!-- brush settings -->
 <g fill="#e2e2e2">
  <rect x="598.2" y="205.8" width="1.6" height="1.4"/><rect x="601.2" y="205.8" width="4.8" height="1.2"/>
  <rect x="598.2" y="208.7" width="1.6" height="1.4"/><rect x="601.2" y="208.7" width="4.8" height="1.2"/>
  <rect x="598.2" y="211.6" width="1.6" height="1.4"/><rect x="601.2" y="211.6" width="4.8" height="1.2"/>
  <use href="#brush" transform="translate(603.2 222.2) rotate(8)"/>
  <!-- brush -->
  <rect x="607" y="237.2" width="12" height="1.6"/>
  <rect x="601.3" y="245" width="10" height="1.6"/>
  <path d="M599.4 236.8 c2 -1.6 5 -1.8 7.8 0.2 v1.8 c-2.8 1.8 -5.8 1 -7.8 -2z"/>
  <path d="M611.2 245.8 l6.4 -4.6 c2.4 2.6 2.4 7.2 0 9.8z"/>
 </g>
 <!-- style -->
 <rect x="603.2" y="263" width="13.8" height="13.2" fill="#7c7c7c"/>
</svg>
<svg style="left:0;top:0" width="700" height="200">
 <g fill="none" stroke="#e2e2e2" stroke-linecap="round">
  <path d="M611.6 166.2 L604.2 179.6" stroke-width="1.1"/>
  <path d="M603.6 172.8 c-1.6 -2.6 0.2 -6.4 4.6 -6.8 c1.4 -0.1 2.6 0.1 3.6 0.3" stroke-width="1.2"/>
  <path d="M606.8 175.4 h6.4" stroke-width="1"/>
  <path d="M602.4 180.2 c1 -0.4 2 -0.4 3.4 0" stroke-width="1.1"/>
  <path d="M612 180.3 h5" stroke-width="1.1"/>
 </g>
 <path d="M610.6 166 l2.2 0 l2.6 14 h-2.6z" fill="#e2e2e2"/>
</svg>
<div class="t" style="left:600px;top:266px;font-size:15.5px;color:#ececec;font-family:'Liberation Sans',sans-serif;font-style:italic;letter-spacing:-0.5px;-webkit-text-stroke-width:0">fx</div>
<!-- status bar -->
<div class="t" style="left:79.6px;top:695.2px;font-size:12.3px;color:#e6e6e6">33.33%</div>
<div class="t" style="left:144.2px;top:695.2px;font-size:12px;color:#d0d0d0">1024 px x 2048 px (72 ppi)</div>
<svg style="left:0;top:0" width="1044" height="705"><path d="M305.5 697.5 l3 3 l-3 3" fill="none" stroke="#d0d0d0" stroke-width="1.1"/></svg>

<svg style="left:0;top:0" width="1044" height="90">
 <g stroke="#e0e0e0" stroke-width="1.1" fill="none">
  <path d="M5.5 60.5 l-2.5 2 l2.5 2 M9.5 60.5 l-2.5 2 l2.5 2"/>
  <path d="M704.5 60.5 l-2.5 2 l2.5 2 M708.5 60.5 l-2.5 2 l2.5 2"/>
  <path d="M990 60.5 l2.5 2 l-2.5 2 M994 60.5 l2.5 2 l-2.5 2"/>
  <path d="M1031.5 60.5 l-2.5 2 l2.5 2 M1035.5 60.5 l-2.5 2 l2.5 2"/>
 </g>
</svg>
<div class="a" style="left:1042px;top:0;width:1px;height:705px;background:#2a2a2a"></div>
<div class="a" style="left:1043px;top:0;width:1px;height:705px;background:#111"></div>
</body></html>
